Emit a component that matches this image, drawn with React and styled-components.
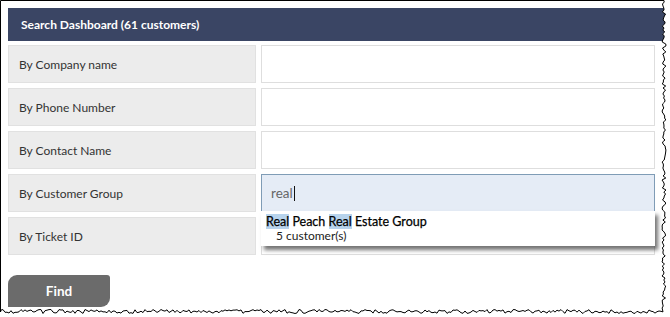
import React from "react";
import styled, { createGlobalStyle } from "styled-components";

const GlobalStyle = createGlobalStyle`
  body {
    margin: 0;
    background: #fff;
    font-family: Lato, "Open Sans", sans-serif;
  }
`;

const Frame = styled.div`
  position: relative;
  width: 670px;
  height: 317px;
  overflow: hidden;
  background: #fff;
  box-sizing: border-box;
  padding: 8px 0 0 8px;
`;

const Header = styled.div`
  width: 658px;
  height: 33px;
  background: #3a4564;
  color: #fff;
  font-size: 12px;
  font-weight: bold;
  display: flex;
  align-items: center;
  padding-left: 13px;
  box-sizing: border-box;
`;

const Form = styled.div`
  display: grid;
  grid-template-columns: 248px 394px;
  grid-auto-rows: 38px;
  column-gap: 5px;
  row-gap: 5px;
  margin-top: 4px;
`;

const Label = styled.div`
  background: #ececec;
  border: 1px solid #e1e1e1;
  box-sizing: border-box;
  display: flex;
  align-items: center;
  padding-left: 10px;
  font-size: 12px;
  color: #333;
`;

const FieldCell = styled.div`
  position: relative;
`;

const Field = styled.div`
  height: 100%;
  box-sizing: border-box;
  border: 1px solid ${(p) => (p.$focused ? "#7f9cb6" : "#dedede")};
  background: ${(p) => (p.$focused ? "#e5ecf6" : "#fff")};
  display: flex;
  align-items: center;
  padding-left: 9px;
  font-size: 13.5px;
  color: #666;
`;

const Caret = styled.span`
  display: inline-block;
  width: 1px;
  height: 15px;
  background: #111;
  margin-left: 1px;
`;

const Dropdown = styled.div`
  position: absolute;
  left: 0;
  top: 37px;
  width: 394px;
  height: 35px;
  box-sizing: border-box;
  background: #fff;
  box-shadow: 3px 4px 4px rgba(0, 0, 0, 0.55);
  padding: 3px 0 0 5px;
  z-index: 2;
`;

const Suggest = styled.div`
  font-size: 12.5px;
  color: #000;
  line-height: 15px;
  -webkit-text-stroke: 0.25px #000;
`;

const Mark = styled.span`
  background: #b7d3ec;
`;

const Count = styled.div`
  font-size: 12px;
  color: #222;
  line-height: 14px;
  padding-left: 10px;
`;

const FindButton = styled.button`
  margin-top: 20px;
  width: 102px;
  height: 32px;
  border: none;
  background: #6b6b6b;
  color: #fff;
  font-family: Lato, sans-serif;
  font-weight: bold;
  font-size: 13.5px;
  border-radius: 9px 3px 9px 0;
  display: block;
`;

const Tear = styled.svg`
  position: absolute;
  left: 0;
  top: 0;
  z-index: 5;
  pointer-events: none;
`;

function tornEdge() {
  let seed = 7;
  const rnd = () => {
    seed = (seed * 9301 + 49297) % 233280;
    return seed / 233280;
  };
  const pts = [[0.5, 0.5]];
  for (let y = 0; y <= 309; y += 2) {
    pts.push([663 + rnd() * 4 - 1, Math.max(0.5, y)]);
  }
  for (let x = 663; x >= 0; x -= 2) {
    pts.push([x, 309.5 + rnd() * 4]);
  }
  pts.push([0.5, 312]);
  return pts.map(([x, y], i) => `${i ? "L" : "M"}${x.toFixed(1)},${y.toFixed(1)}`).join(" ") + " Z";
}

const rows = [
  { label: "By Company name" },
  { label: "By Phone Number" },
  { label: "By Contact Name" },
  { label: "By Customer Group", value: "real" },
  { label: "By Ticket ID" },
];

export default function App() {
  const edge = tornEdge();
  return (
    <>
      <GlobalStyle />
      <Frame>
        <Header>Search Dashboard (61 customers)</Header>
        <Form>
          {rows.map((row) => (
            <React.Fragment key={row.label}>
              <Label>{row.label}</Label>
              <FieldCell>
                <Field $focused={!!row.value}>
                  {row.value}
                  {row.value && <Caret />}
                </Field>
                {row.value && (
                  <Dropdown>
                    <Suggest>
                      <Mark>Real</Mark> Peach <Mark>Real</Mark> Estate Group
                    </Suggest>
                    <Count>5 customer(s)</Count>
                  </Dropdown>
                )}
              </FieldCell>
            </React.Fragment>
          ))}
        </Form>
        <FindButton>Find</FindButton>
        <Tear width="670" height="317" viewBox="0 0 670 317">
          <path d={"M0,0 H670 V317 H0 Z " + edge} fill="#fff" fillRule="evenodd" />
          <path d={edge} fill="none" stroke="#000" strokeWidth="1" />
        </Tear>
      </Frame>
    </>
  );
}
